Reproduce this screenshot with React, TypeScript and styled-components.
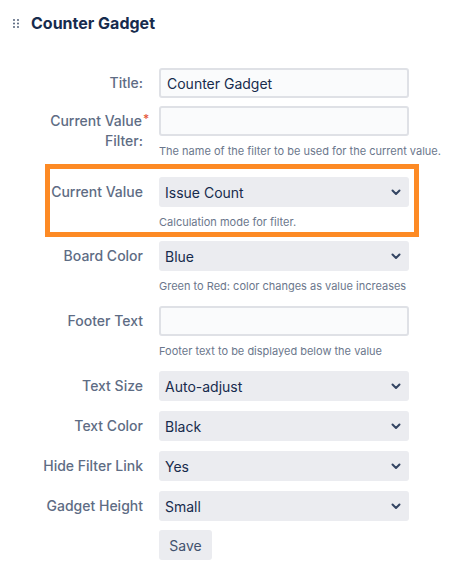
import React from "react";
import styled, { createGlobalStyle } from "styled-components";

const Global = createGlobalStyle`
  html, body { margin: 0; padding: 0; background: #ffffff; }
  body { font-family: Inter, "Noto Sans", "Liberation Sans", sans-serif; -webkit-font-smoothing: antialiased; }
  * { box-sizing: border-box; }
`;

const Page = styled.div`
  width: 455px;
  height: 576px;
  background: #fff;
  overflow: hidden;
`;

const Header = styled.div`
  display: flex;
  align-items: center;
  height: 46px;
  padding-left: 13px;
  gap: 12px;
`;

const HeaderTitle = styled.h1`
  margin: 0;
  font-size: 16px;
  line-height: 20px;
  font-weight: 700;
  color: #172b4d;
`;

const Form = styled.div`
  display: flex;
  flex-direction: column;
  gap: 10px;
  padding-top: 22px;
`;

const Row = styled.div<{ $inset?: number; $after?: number }>`
  display: grid;
  grid-template-columns: ${(p) => 143 - (p.$inset ?? 0)}px 1fr;
  column-gap: 16px;
  align-items: start;
  margin-bottom: ${(p) => p.$after ?? 0}px;
`;

const Label = styled.label`
  text-align: right;
  font-size: 14px;
  line-height: 20px;
  font-weight: 500;
  color: #5e6c84;
  padding-top: 5px;
  white-space: nowrap;
`;

const Req = styled.span`
  display: inline-block;
  width: 0;
  overflow: visible;
  color: #e5583a;
  font-size: 12px;
  vertical-align: top;
  line-height: 16px;
  padding-left: 1px;
`;

const Field = styled.div`
  display: flex;
  flex-direction: column;
  min-width: 0;
`;

const TextInput = styled.div`
  width: 250px;
  height: 30px;
  border: 2px solid #dfe1e6;
  border-radius: 3px;
  background: #fafbfc;
  padding: 0 6px;
  display: flex;
  align-items: center;
  font-size: 14px;
  color: #172b4d;
`;

const SelectBox = styled.div`
  width: 250px;
  height: 30px;
  border-radius: 3px;
  background: #ebecf0;
  padding: 0 8px 0 6px;
  display: flex;
  align-items: center;
  justify-content: space-between;
  font-size: 14px;
  color: #172b4d;
`;

const Help = styled.div`
  font-size: 11px;
  line-height: 14px;
  color: #6b778c;
  padding-top: 8px;
  height: 25px;
  white-space: nowrap;
`;

const Highlight = styled.div`
  margin: -7px 36px -6px 45px;
  border: 5px solid #fd8a24;
  padding-top: 8px;
`;

const SaveButton = styled.button`
  width: 53px;
  height: 30px;
  border: none;
  border-radius: 3px;
  background: #ebecf0;
  color: #42526e;
  font-family: inherit;
  font-size: 14px;
  padding: 0;
  cursor: pointer;
`;

const Grip = () => (
  <svg width="6" height="9" viewBox="0 0 6 9" aria-hidden>
    {[1, 4.5, 8].map((y) =>
      [1, 5].map((x) => <circle key={`${x}-${y}`} cx={x} cy={y} r="0.9" fill="#42526e" />)
    )}
  </svg>
);

const Chevron = () => (
  <svg width="10" height="7" viewBox="0 0 10 7" aria-hidden>
    <path d="M1.5 1.5 L5 5 L8.5 1.5" fill="none" stroke="#344563" strokeWidth="2" strokeLinecap="round" strokeLinejoin="round" />
  </svg>
);

const Select = ({ value }: { value: string }) => (
  <SelectBox>
    <span>{value}</span>
    <Chevron />
  </SelectBox>
);

export default function App() {
  return (
    <Page>
      <Global />
      <Header>
        <Grip />
        <HeaderTitle>Counter Gadget</HeaderTitle>
      </Header>
      <Form>
        <Row $after={-2}>
          <Label>Title:</Label>
          <Field>
            <TextInput>Counter Gadget</TextInput>
          </Field>
        </Row>
        <Row>
          <Label>
            Current Value<Req>*</Req>
            <br />
            Filter:
          </Label>
          <Field>
            <TextInput />
            <Help>The name of the filter to be used for the current value.</Help>
          </Field>
        </Row>
        <Highlight>
          <Row $inset={50}>
            <Label>Current Value</Label>
            <Field>
              <Select value="Issue Count" />
              <Help>Calculation mode for filter.</Help>
            </Field>
          </Row>
        </Highlight>
        <Row>
          <Label>Board Color</Label>
          <Field>
            <Select value="Blue" />
            <Help>Green to Red: color changes as value increases</Help>
          </Field>
        </Row>
        <Row>
          <Label>Footer Text</Label>
          <Field>
            <TextInput />
            <Help>Footer text to be displayed below the value</Help>
          </Field>
        </Row>
        <Row>
          <Label>Text Size</Label>
          <Field>
            <Select value="Auto-adjust" />
          </Field>
        </Row>
        <Row>
          <Label>Text Color</Label>
          <Field>
            <Select value="Black" />
          </Field>
        </Row>
        <Row>
          <Label>Hide Filter Link</Label>
          <Field>
            <Select value="Yes" />
          </Field>
        </Row>
        <Row $after={-1}>
          <Label>Gadget Height</Label>
          <Field>
            <Select value="Small" />
          </Field>
        </Row>
        <Row>
          <span />
          <Field>
            <SaveButton>Save</SaveButton>
          </Field>
        </Row>
      </Form>
    </Page>
  );
}
